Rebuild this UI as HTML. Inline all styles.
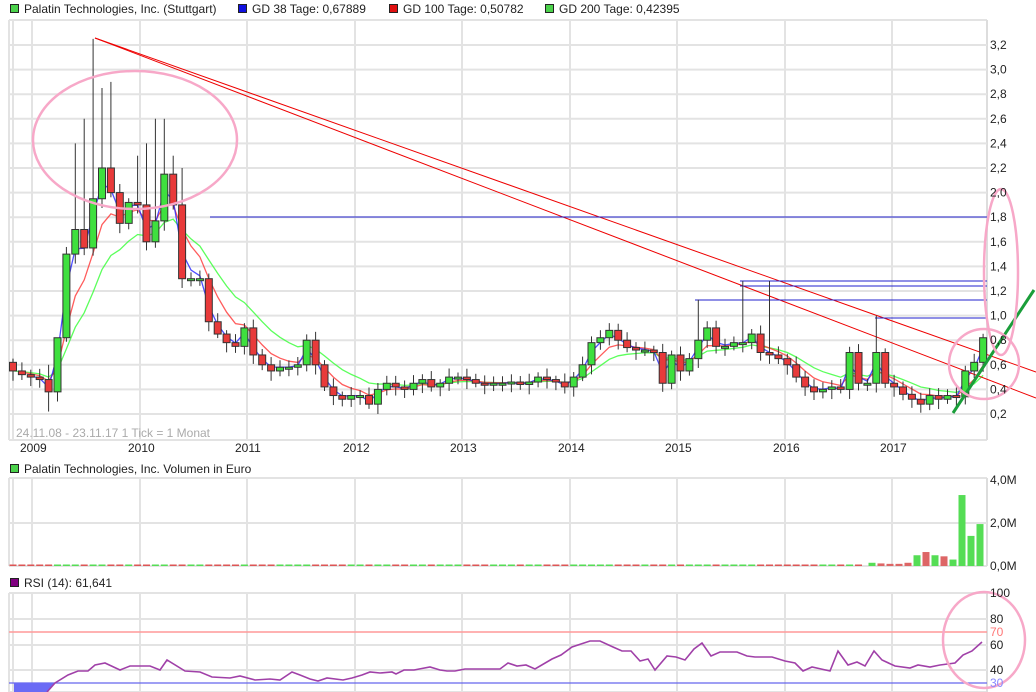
<!DOCTYPE html>
<html><head><meta charset="utf-8"><style>
html,body{margin:0;padding:0;background:#fff;width:1036px;height:692px;overflow:hidden}
svg{display:block;font-family:"Liberation Sans",sans-serif}
</style></head><body>
<svg id="s" width="1036" height="692" viewBox="0 0 1036 692" xmlns="http://www.w3.org/2000/svg">
<g font-size="12" fill="#222">
<rect x="10.5" y="4.5" width="8" height="8" fill="#4bd24b" stroke="#222"/><text x="24" y="13">Palatin Technologies, Inc. (Stuttgart)</text>
<rect x="238.5" y="4.5" width="8" height="8" fill="#1010e0" stroke="#222"/><text x="252" y="13">GD 38 Tage: 0,67889</text>
<rect x="389.5" y="4.5" width="8" height="8" fill="#e01010" stroke="#222"/><text x="403" y="13">GD 100 Tage: 0,50782</text>
<rect x="545.5" y="4.5" width="8" height="8" fill="#4bd24b" stroke="#222"/><text x="559" y="13">GD 200 Tage: 0,42395</text>
<rect x="10.5" y="464.5" width="8" height="8" fill="#4bd24b" stroke="#222"/><text x="24" y="473">Palatin Technologies, Inc. Volumen in Euro</text>
<rect x="10.5" y="578.5" width="8" height="8" fill="#800080" stroke="#222"/><text x="24" y="587">RSI (14): 61,641</text>
</g>
<g id="grid" stroke="#e3e3e3" stroke-width="2" fill="none"></g>
<g id="main"></g>
<g font-size="12" fill="#222" id="lab"></g>
</svg>
<script>
(function(){
var M=document.getElementById('main'),G=document.getElementById('grid'),L=document.getElementById('lab');
function el(p,t,a){var e=document.createElementNS('http://www.w3.org/2000/svg',t);for(var k in a)e.setAttribute(k,a[k]);p.appendChild(e);return e}
[[20,440],[478,566],[593,692]].forEach(function(r){el(G,'line',{x1:9,y1:r[0],x2:987,y2:r[0]});el(G,'line',{x1:9,y1:r[1],x2:987,y2:r[1]});});
var gx=[13,32,140,247,355,462,570,677,785,892];
gx.forEach(function(x){el(G,'line',{x1:x,y1:20,x2:x,y2:440});el(G,'line',{x1:x,y1:478,x2:x,y2:566});el(G,'line',{x1:x,y1:593,x2:x,y2:692});});
el(G,'line',{x1:9,y1:20,x2:9,y2:440});el(G,'line',{x1:9,y1:478,x2:9,y2:566});el(G,'line',{x1:9,y1:593,x2:9,y2:692});
el(G,'line',{x1:987,y1:20,x2:987,y2:440,stroke:'#ddd'});el(G,'line',{x1:987,y1:478,x2:987,y2:566,stroke:'#ddd'});el(G,'line',{x1:987,y1:593,x2:987,y2:692,stroke:'#ddd'});
function py(p){return 414-(p-0.2)*123}
for(var p=0.2;p<3.25;p+=0.2){var y=py(p);el(G,'line',{x1:9,y1:y,x2:987,y2:y});el(L,'text',{x:990,y:y+4}).textContent=p.toFixed(1).replace('.',',');}
el(G,'line',{x1:9,y1:523,x2:987,y2:523});
[['4,0M',484],['2,0M',527],['0,0M',570]].forEach(function(a){el(L,'text',{x:990,y:a[1]}).textContent=a[0]});
[619,645,670].forEach(function(y){el(G,'line',{x1:9,y1:y,x2:987,y2:y})});
[['100',597],['80',623],['60',649],['40',674]].forEach(function(a){el(L,'text',{x:990,y:a[1]}).textContent=a[0]});
el(L,'text',{x:990,y:636,fill:'#f77'}).textContent='70';
el(L,'text',{x:990,y:687,fill:'#88f'}).textContent='30';
var yrs=['2009','2010','2011','2012','2013','2014','2015','2016','2017'];
yrs.forEach(function(s,i){el(L,'text',{x:gx[i+1]-12,y:452}).textContent=s});
el(L,'text',{x:16,y:437,fill:'#aaa'}).textContent='24.11.08 - 23.11.17   1 Tick = 1 Monat';
var c=[.55,.52,.5,.48,.38,.82,1.5,1.7,1.55,1.95,2.2,2.0,1.75,1.92,1.9,1.6,1.77,2.15,1.9,1.3,1.3,1.3,.95,.85,.78,.75,.9,.68,.6,.55,.58,.58,.6,.8,.6,.42,.35,.32,.35,.35,.28,.4,.45,.42,.4,.45,.48,.42,.45,.5,.5,.48,.45,.44,.45,.45,.46,.44,.46,.5,.48,.46,.42,.5,.6,.78,.82,.88,.8,.74,.72,.72,.7,.45,.68,.55,.65,.8,.9,.75,.75,.78,.78,.85,.7,.68,.65,.6,.5,.42,.38,.4,.42,.4,.7,.45,.45,.7,.45,.42,.36,.32,.28,.35,.32,.35,.34,.55,.62,.82];
var hi={7:2.4,8:2.6,9:3.25,10:2.85,11:2.9,14:2.3,15:2.4,16:2.6,17:2.6,18:2.3,19:2.2,77:1.13,82:1.28,85:1.28,97:1.0,4:.6,5:.6};
function X(i){return 13+8.9*i}
function ema(n){var r=[],v=c[0];c.forEach(function(x){v=v+(x-v)*2/(n+1);r.push(v)});return r}
function line(arr,col,st){var d='';arr.forEach(function(v,i){if(i>=st)d+=(d?'L':'M')+X(i).toFixed(1)+' '+py(v).toFixed(1)});el(M,'path',{d:d,stroke:col,fill:'none','stroke-width':1.3,opacity:.8})}
line(ema(10),'#3f3',0);line(ema(5),'#f33',1);line(ema(2),'#22f',2);
el(M,'line',{x1:95,y1:38,x2:1036,y2:372,stroke:'#e00','stroke-width':1});
el(M,'line',{x1:95,y1:38,x2:1036,y2:398,stroke:'#e00','stroke-width':1});
[[210,217],[740,281],[740,286],[695,300],[875,318]].forEach(function(a){el(M,'line',{x1:a[0],y1:a[1],x2:987,y2:a[1],stroke:'#22c','stroke-width':1})});
for(var i=0;i<c.length;i++){var o=i?c[i-1]:.62,cl=c[i],x=X(i);var tp=Math.max(o,cl),bt=Math.min(o,cl);
var h=hi[i]||tp+0.03+0.04*Math.abs(Math.sin(i*1.7)),lo=bt-0.03-0.05*Math.abs(Math.cos(i*1.3));if(i==4)lo=.22;
el(M,'line',{x1:x,y1:py(h),x2:x,y2:py(lo),stroke:'#333','stroke-width':1});
var y1=py(tp),y2=py(bt);if(y2-y1<2)y2=y1+2;
el(M,'rect',{x:x-3.5,y:y1,width:7,height:y2-y1,fill:cl>=o?'#3ee03e':'#e83a3a',stroke:'#333','stroke-width':1});
if(i<96)el(M,'rect',{x:x-3.5,y:564.5,width:7,height:1.5,fill:cl>=o?'#5d5':'#d55'});}
[[872,.15,'#5d5'],[881,.12,'#d66'],[890,.1,'#d66'],[899,.1,'#d66'],[908,.15,'#d66'],[917,.5,'#5d5'],[926,.65,'#d66'],[935,.5,'#5d5'],[944,.45,'#d66'],[953,.3,'#5d5'],[962,3.3,'#5d5'],[971,1.4,'#5d5'],[980,1.95,'#5d5']].forEach(function(a){el(M,'rect',{x:a[0]-3.5,y:566-a[1]*21.5,width:7,height:a[1]*21.5,fill:a[2]})});
el(M,'line',{x1:9,y1:632,x2:987,y2:632,stroke:'#f99','stroke-width':1.5});
el(M,'line',{x1:9,y1:683,x2:987,y2:683,stroke:'#66e','stroke-width':1.2});
el(M,'polygon',{points:'14,683 55,683 47,692 14,692',fill:'#6b6bf5'});
var r='47,692 55,683 68,675 78,671 88,671 95,665 105,663 120,670 130,666 150,666 160,670 167,660 185,671 200,672 212,677 230,678 240,676 255,680 270,679 280,680 292,672 300,675 310,679 318,681 327,678 343,680 352,678 362,675 370,672 380,673 392,672 396,674 404,670 414,670 430,667 440,670 447,671 455,671 465,669 500,669 508,663 517,666 526,665 535,669 552,659 561,655 572,647 584,643 590,641 600,641 613,647 622,651 631,651 640,661 648,659 655,670 667,656 676,657 685,660 694,649 702,643 711,656 720,652 737,652 747,656 755,657 772,657 785,661 795,663 803,671 812,667 830,671 838,651 848,665 857,662 865,666 874,651 882,660 895,666 910,668 918,665 930,667 940,665 955,663 963,655 972,651 982,642';
el(M,'polyline',{points:r,fill:'none',stroke:'#a040a8','stroke-width':1.6});
el(M,'line',{x1:953,y1:413,x2:1034,y2:290,stroke:'#1a9e3a','stroke-width':3});
function E(cx,cy,rx,ry){el(M,'ellipse',{cx:cx,cy:cy,rx:rx,ry:ry,fill:'none',stroke:'#f7a8c8','stroke-width':2.5})}
E(135,140,102,69);E(1001,272,17,83);E(984,364,35,35);E(984,640,41,48);
})();
</script>
</body></html>
